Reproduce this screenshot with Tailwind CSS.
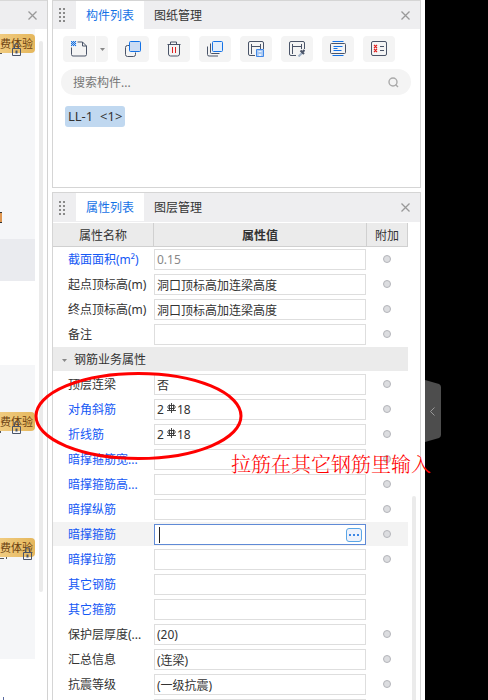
<!DOCTYPE html>
<html lang="zh-CN">
<head>
  <meta charset="UTF-8" />
  <meta name="viewport" content="width=device-width, initial-scale=1.0" />
  <title>构件属性</title>
  <script src="https://cdn.jsdelivr.net/npm/@tailwindcss/browser@4"></script>
</head>
<body class="relative flex h-screen overflow-hidden bg-white font-['Noto_Sans','Noto_Sans_CJK_SC',sans-serif] text-xs text-[#333]">

  <!-- Left panel -->
  <aside class="flex w-12 shrink-0 flex-col border-r border-[#d2d2d2]">
    <div class="flex h-[29px] shrink-0 items-center justify-end border-t border-[#d8d8d8] bg-[#eeeef0] pr-2.5">
      <button aria-label="关闭" class="text-[#999]">
        <svg class="size-[9px]" viewBox="0 0 9 9" fill="none" stroke="currentColor" stroke-width="1.3"><path d="M.5 .5l8 8M8.500 .5l-8 8" /></svg>
      </button>
    </div>
    <div class="flex flex-1 gap-1">
      <div class="w-[35px]">
        <div class="h-[210px] bg-[#f5f6f8] pt-[5px]">
          <div class="relative h-[19px] rounded-r-sm bg-linear-to-r from-[#f0cb80] to-[#e5b75c] text-[11px] leading-5 whitespace-nowrap text-[#6b3f10]">费体验
            <svg class="absolute top-[9px] left-3 h-[13px] w-[9px]" viewBox="0 0 9 13" fill="none" stroke="#4a5468"><path d="M.5 5.500h8v7h-8zM2.500 5.500v-3a2 2 0 0 1 4 0v3" /><path d="M4.500 7.500v3" stroke-width="2" /></svg>
          </div>
          <div class="h-px w-0.5 bg-[#555]"></div>
          <div class="mt-[158px] h-[11px] w-0.5 border-y border-[#333] bg-[#df9650]"></div>
        </div>
        <div class="h-[42px] bg-[#eaebef]"></div>
        <div class="mt-[84px] h-[294px] bg-[#f5f6f8] pt-[47px]">
          <div class="relative h-[19px] rounded-r-sm bg-linear-to-r from-[#f0cb80] to-[#e5b75c] text-[11px] leading-5 whitespace-nowrap text-[#6b3f10]">费体验
            <svg class="absolute top-[9px] left-3 h-[13px] w-[9px]" viewBox="0 0 9 13" fill="none" stroke="#4a5468"><path d="M.5 5.500h8v7h-8zM2.500 5.500v-3a2 2 0 0 1 4 0v3" /><path d="M4.500 7.500v3" stroke-width="2" /></svg>
          </div>
          <div class="h-0.5 w-px bg-[#555]"></div>
          <div class="relative mt-[105px] h-[19px] rounded-r-sm bg-linear-to-r from-[#f0cb80] to-[#e5b75c] text-[11px] leading-5 whitespace-nowrap text-[#6b3f10]">费体验
            <svg class="absolute top-[9px] left-[23px] h-[13px] w-[9px]" viewBox="0 0 9 13" fill="none" stroke="#4a5468"><path d="M.5 5.500h8v7h-8zM2.500 5.500v-3a2 2 0 0 1 4 0v3" /><path d="M4.500 7.500v3" stroke-width="2" /></svg>
          </div>
          <div class="flex h-0.5 gap-0.5"><i class="w-1 border-b border-[#555]"></i><i class="w-px bg-[#555]"></i></div>
        </div>
        <div class="mt-[38px] h-1 w-1 border-r border-[#5a6aa0]"></div>
      </div>
      <div class="mt-3 h-[551px] w-1 rounded-full bg-[#ebebeb]"></div>
    </div>
  </aside>

  <main class="flex min-w-0 flex-1 flex-col gap-1 px-1">

    <!-- Component list -->
    <section class="h-[188px] shrink-0 border border-[#d5d5d5]">
      <header class="flex h-7 items-stretch bg-[#eeeef0]">
        <div class="flex w-[23px] items-center pl-1.5">
          <svg class="h-3.5 w-1.5" viewBox="0 0 6 14" fill="#8a8a8a"><path d="M0 0h2v2H0zM4 0h2v2H4zM0 4h2v2H0zM4 4h2v2H4zM0 8h2v2H0zM4 8h2v2H4zM0 12h2v2H0zM4 12h2v2H4z" /></svg>
        </div>
        <button class="bg-white px-2.5 pt-0.5 text-[#1472e6]">构件列表</button>
        <button class="px-2.5 pt-0.5">图纸管理</button>
        <button aria-label="关闭" class="mr-2.5 ml-auto text-[#999]">
          <svg class="size-[9px]" viewBox="0 0 9 9" fill="none" stroke="currentColor" stroke-width="1.3"><path d="M.5 .5l8 8M8.500 .5l-8 8" /></svg>
        </button>
      </header>
      <div class="flex gap-[9px] px-2.5 pt-[7px]">
        <div class="flex gap-px">
          <button aria-label="新建" class="flex h-[26px] w-8 items-center justify-center rounded-l bg-[#f4f4f4]">
            <svg class="size-4" viewBox="0 0 16 16" fill="none" stroke="#4a5468"><path d="M.5 6.500v7a1.500 1.500 0 0 0 1.500 1.500h12a1.500 1.500 0 0 0 1.500-1.500V5l-4-4H6.500" /><path d="M11.500 1v4h4" /><path d="M0 0h1v1H0zM2 0h1v1H2zM4 0h1v1H4zM1 1h1v1H1zM3 1h1v1H3zM0 2h1v1H0zM2 2h1v1H2zM4 2h1v1H4zM1 3h1v1H1zM3 3h1v1H3zM0 4h1v1H0zM2 4h1v1H2zM4 4h1v1H4z" fill="#1472e6" stroke="#1472e6" stroke-width=".2" /></svg>
          </button>
          <button aria-label="新建选项" class="flex h-[26px] w-3 items-center justify-center rounded-r bg-[#f4f4f4]">
            <svg class="h-[3px] w-[5px]" viewBox="0 0 5 3" fill="#888"><path d="M0 0h5L2.500 3z" /></svg>
          </button>
        </div>
        <button aria-label="复制" class="flex h-[26px] w-8 items-center justify-center rounded bg-[#f4f4f4]">
          <svg class="size-4" viewBox="0 0 16 16" fill="none" stroke="#4a5468"><path d="M4.500 4.500h-2a2 2 0 0 0-2 2v7a2 2 0 0 0 2 2h6a2 2 0 0 0 2-2v-2" /><rect x="4.500" y=".5" width="11" height="10" rx="1" fill="#ccdcf3" stroke="#1472e6" /></svg>
        </button>
        <button aria-label="删除" class="flex h-[26px] w-8 items-center justify-center rounded bg-[#f4f4f4]">
          <svg class="size-4" viewBox="0 0 16 16" fill="none" stroke="#4a5468"><path d="M1.500 3.500h13M4.500 3.500V1h6v2.500M2.500 3.500V13a2 2 0 0 0 2 2h7a2 2 0 0 0 2-2V3.500" /><path d="M6.500 6v6M9.500 6v6" stroke="#e02020" /></svg>
        </button>
        <button aria-label="层间复制" class="flex h-[26px] w-8 items-center justify-center rounded bg-[#f4f4f4]">
          <svg class="size-4" viewBox="0 0 16 16" fill="none" stroke="#4a5468"><path d="M3.500 2.500v9a1 1 0 0 0 1 1h8M.5 5.500v8a1.500 1.500 0 0 0 1.500 1.500h9" /><rect x="5.500" y=".5" width="10" height="10" rx="1" fill="#e3eefb" stroke="#1472e6" /></svg>
        </button>
        <button aria-label="存档" class="flex h-[26px] w-8 items-center justify-center rounded bg-[#f4f4f4]">
          <svg class="size-4" viewBox="0 0 16 16" fill="none" stroke="#4a5468"><path d="M7 14.500H2A1.500 1.500 0 0 1 .5 13V2A1.500 1.500 0 0 1 2 .5h12A1.500 1.500 0 0 1 15.500 2v6M3.500 3v10M12.500 3v5M3.500 5.500h9" /><path d="M8.500 8.500h7v7h-7z" fill="#a9c9f3" stroke="#4187e6" /><path d="M10.500 10.500h3M11 13.500h2v1h-2z" stroke="#eaf2fc" fill="#eaf2fc" /></svg>
        </button>
        <button aria-label="提取" class="flex h-[26px] w-8 items-center justify-center rounded bg-[#f4f4f4]">
          <svg class="size-4" viewBox="0 0 16 16" fill="none" stroke="#4a5468"><path d="M7 14.500H2A1.500 1.500 0 0 1 .5 13V2A1.500 1.500 0 0 1 2 .5h12A1.500 1.500 0 0 1 15.500 2v6M3.500 3v10M12.500 3v5M3.500 5.500h9" /><path d="M9.500 15.500l4-4" stroke="#9fb0c5" stroke-width="2" /><path d="M11.500 9.500l3.500 3.500M12.500 12l3-3" stroke-width="2" /></svg>
        </button>
        <button aria-label="排序" class="flex h-[26px] w-8 items-center justify-center rounded bg-[#f4f4f4]">
          <svg class="size-4" viewBox="0 0 16 16" fill="none" stroke="#1472e6"><path d="M2.500 .5h11M2.500 14.500h11M3.500 5.500h9M3.500 7.500h4M3.500 9.500h8" /><rect x=".5" y="2.500" width="15" height="10" rx="1" stroke="#4a5468" /></svg>
        </button>
        <button aria-label="检查" class="flex h-[26px] w-8 items-center justify-center rounded bg-[#f4f4f4]">
          <svg class="size-4" viewBox="0 0 16 16" fill="none" stroke="#4a5468"><rect x=".5" y=".5" width="15" height="14" rx="1.500" /><path d="M9 5.500h4M9 9.500h4" /><path d="M3 4l3 3M6 4L3 7M3 8l3 3M6 8l-3 3" stroke="#e02020" stroke-width="1.200" /></svg>
        </button>
      </div>
      <label class="mr-[9px] ml-2 mt-[7px] flex h-[26px] items-center rounded-full bg-[#f4f4f4] px-3">
        <input type="text" placeholder="搜索构件..." aria-label="搜索构件" class="min-w-0 flex-1 bg-transparent pt-0.5 outline-none placeholder:text-[#777]" />
        <svg class="size-[11px]" viewBox="0 0 11 11" fill="none" stroke="#aaa" stroke-width="1.4"><circle cx="5" cy="5" r="4" /><path d="M7.500 7.500l2.500 2.500" /></svg>
      </label>
      <button class="mt-[11px] ml-3 h-[21px] rounded-[3px] bg-[#c0d8f0] px-[3px] text-[13px] leading-[21px] whitespace-pre">LL-1  &lt;1&gt;</button>
    </section>

    <!-- Property list -->
    <section class="flex min-h-0 flex-1 flex-col overflow-hidden border border-b-0 border-[#d5d5d5]">
      <header class="mb-px flex h-[29px] shrink-0 items-stretch bg-[#eeeef0]">
        <div class="flex w-[23px] items-center pl-1.5">
          <svg class="h-3.5 w-1.5" viewBox="0 0 6 14" fill="#8a8a8a"><path d="M0 0h2v2H0zM4 0h2v2H4zM0 4h2v2H0zM4 4h2v2H4zM0 8h2v2H0zM4 8h2v2H4zM0 12h2v2H0zM4 12h2v2H4z" /></svg>
        </div>
        <button class="mb-px bg-white px-2.5 pt-0.5 text-[#1472e6]">属性列表</button>
        <button class="px-2.5">图层管理</button>
        <button aria-label="关闭" class="mr-2.5 ml-auto text-[#999]">
          <svg class="size-[9px]" viewBox="0 0 9 9" fill="none" stroke="currentColor" stroke-width="1.3"><path d="M.5 .5l8 8M8.500 .5l-8 8" /></svg>
        </button>
      </header>
      <div class="flex items-stretch">
        <div class="min-w-0 flex-1">
          <table class="w-full table-fixed border-separate border-spacing-0">
            <colgroup><col class="w-[101px]" /><col /><col class="w-[41px]" /></colgroup>
            <thead>
              <tr class="h-6 bg-[#ebebeb]">
                <th class="border-r border-b border-[#d0d0d0] p-0 pt-0.5 font-normal">属性名称</th>
                <th class="border-r border-b border-[#d0d0d0] p-0 pt-0.5 font-bold">属性值</th>
                <th class="border-r border-b border-[#d0d0d0] p-0 pt-0.5 font-normal">附加</th>
              </tr>
            </thead>
            <tbody id="props"></tbody>
          </table>
        </div>
        <div class="w-3 pt-[273px] pl-1"><div class="h-full w-1 rounded-t bg-[#ebebeb]"></div></div>
      </div>
    </section>
  </main>

  <!-- Drawing area with collapsed side handle -->
  <div class="flex w-[63px] shrink-0 flex-col bg-black pt-[380px]">
    <button aria-label="展开" class="h-[62px] w-4">
      <svg class="h-[62px] w-4" viewBox="0 0 16 62"><path d="M0 0l14 4q2 1 2 3v48q0 2-2 3L0 62z" fill="#4d4d4d" /><path d="M9.500 27.500l-4 4 4 4" fill="none" stroke="#999" /></svg>
    </button>
  </div>

  <!-- Red markup over the table -->
  <svg class="pointer-events-none absolute top-[371px] left-[34px] h-[90px] w-[210px]" viewBox="0 0 210 90" fill="none" stroke="#f00" stroke-width="3"><ellipse cx="104.500" cy="45" rx="102.500" ry="42.500" /></svg>
  <p class="absolute top-[450px] left-[231px] font-['Noto_Serif_CJK_SC','Noto_Sans_CJK_SC',serif] text-xl leading-7 font-light whitespace-nowrap text-[#f00]">拉筋在其它钢筋里输入</p>

  <script>
    // kind: value (default), readonly, rebar, active, section
    const rows = [
      { name: '截面面积(m²)', value: '0.15', blue: true, kind: 'readonly', dot: true },
      { name: '起点顶标高(m)', value: '洞口顶标高加连梁高度', dot: true },
      { name: '终点顶标高(m)', value: '洞口顶标高加连梁高度', dot: true },
      { name: '备注', value: '', dot: true },
      { name: '钢筋业务属性', kind: 'section' },
      { name: '顶层连梁', value: '否', dot: true },
      { name: '对角斜筋', value: '18', blue: true, kind: 'rebar', dot: true },
      { name: '折线筋', value: '18', blue: true, kind: 'rebar', dot: true },
      { name: '暗撑箍筋宽...', value: '', blue: true, dot: true },
      { name: '暗撑箍筋高...', value: '', blue: true, dot: true },
      { name: '暗撑纵筋', value: '', blue: true, dot: true },
      { name: '暗撑箍筋', value: '', blue: true, kind: 'active', dot: true },
      { name: '暗撑拉筋', value: '', blue: true, dot: true },
      { name: '其它钢筋', value: '', blue: true },
      { name: '其它箍筋', value: '', blue: true },
      { name: '保护层厚度(...', value: '(20)', dot: true },
      { name: '汇总信息', value: '(连梁)', dot: true },
      { name: '抗震等级', value: '(一级抗震)', dot: true },
      { name: '', value: '' },
    ];

    function valueBox(r, i) {
      if (r.kind === 'rebar') {
        return `<div class="flex h-[21px] items-center border border-[#dedede] bg-white px-0.5">
          <input id="p${i}" value="2" class="w-2 outline-none" />
          <svg class="mr-px ml-0.5 mb-1 h-[10px] w-[9px]" viewBox="0 0 9 10" fill="none" stroke="#333"><path d="M4.500 0v10M2.500 1.500v6M6.500 1.500v6M1.500 2.500h6M0 7.500h9M1.500 2.500q-1.500 1.500 0 3h6q1.500-1.500 0-3" stroke-width=".9" /></svg>
          <input value="${r.value}" aria-label="${r.name}直径" class="min-w-0 flex-1 outline-none" /></div>`;
      }
      if (r.kind === 'active') {
        return `<div class="flex h-[21px] items-center border border-[#5f8ad6] bg-white pr-[3px] pl-1">
          <span class="h-4 w-px bg-[#222]"></span>
          <input id="p${i}" class="min-w-0 flex-1 outline-none" />
          <button aria-label="更多" class="flex h-3.5 w-4 items-center justify-center rounded-[3px] border border-[#5aa6e6] bg-[#eef2fb]">
            <svg class="h-0.5 w-2.5" viewBox="0 0 10 2" fill="#3d87e6"><path d="M0 0h2v2H0zM4 0h2v2H4zM8 0h2v2H8z" /></svg>
          </button></div>`;
      }
      const tone = r.kind === 'readonly' ? 'text-[#888]' : 'text-[#333]';
      return `<input id="p${i}" value="${r.value}" aria-label="${r.name || '属性'}" class="block h-[21px] w-full border border-[#dedede] bg-white px-0.5 outline-none ${tone}" />`;
    }

    document.getElementById('props').innerHTML = rows.map((r, i) => {
      if (r.kind === 'section') {
        return `<tr class="h-[25px]"><td colspan="3" class="border-b border-white bg-[#ebebeb] bg-clip-padding p-0 pt-0.5 pl-[9px]">
          <button class="flex items-center gap-[7px]"><svg class="h-[3px] w-[5px]" viewBox="0 0 5 3" fill="#888"><path d="M0 0h5L2.500 3z" /></svg>${r.name}</button></td></tr>`;
      }
      const bg = r.kind === 'active' ? 'bg-[#f3f3f3]' : 'bg-white';
      const color = r.blue ? 'text-[#1458f5]' : 'text-[#333]';
      const dot = r.dot ? `<input type="checkbox" aria-label="附加 ${r.name}" class="mx-auto block size-2 appearance-none rounded-full border border-[#b4b5ba] bg-[#dcdde0]" />` : '';
      return `<tr class="h-[25px]">
        <td class="border-b border-white p-0 pt-0.5 pl-[15px] whitespace-nowrap ${bg} ${color}"><label for="p${i}">${r.name}</label></td>
        <td class="border-b border-white p-0 pt-0.5 pr-px pb-px ${bg}">${valueBox(r, i)}</td>
        <td class="border-b border-white p-0 pr-0.5 ${bg}">${dot}</td></tr>`;
    }).join('');
  </script>
</body>
</html>
